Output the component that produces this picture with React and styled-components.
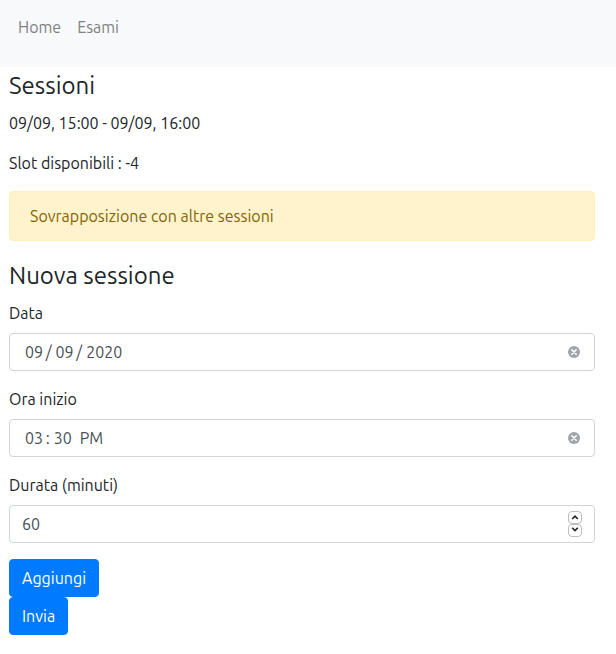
import React, { useState } from "react";
import styled, { createGlobalStyle } from "styled-components";

const GlobalStyle = createGlobalStyle`
  *, *::before, *::after { box-sizing: border-box; }
  body {
    margin: 0;
    background: #fff;
    color: #212529;
    font-family: Ubuntu, "Noto Sans", sans-serif;
    font-size: 16px;
    line-height: 24px;
  }
`;

const Navbar = styled.nav`
  display: flex;
  padding: 7px 10px 20px;
  background: #f8f9fb;
`;

const NavLink = styled.a`
  padding: 8px;
  color: #808182;
  text-decoration: none;
`;

const Main = styled.main`
  padding: 0 21px 16px 9px;
`;

const Heading = styled.h4`
  margin: 0 0 6px;
  font-size: 24px;
  font-weight: 400;
  line-height: 38px;
`;

const Paragraph = styled.p`
  margin: 0 0 16px;
`;

const Alert = styled.div`
  margin-bottom: 16px;
  padding: 12px 20px;
  border: 1px solid #ffeeba;
  border-radius: 4px;
  background: #fff3cd;
  color: #856404;
`;

const Field = styled.div`
  margin-bottom: 16px;
`;

const Label = styled.label`
  display: block;
  margin-bottom: 8px;
`;

const Control = styled.div`
  display: flex;
  align-items: center;
  height: 38px;
  padding: 0 12px 0 ${(p) => (p.$inset ? 15 : 12)}px;
  border: 1px solid #ced4da;
  border-radius: 4px;
  background: #fff;
`;

const Input = styled.input`
  flex: 1;
  min-width: 0;
  padding: 0;
  border: 0;
  outline: 0;
  background: transparent;
  color: #495057;
  font: inherit;
  appearance: textfield;

  &::-webkit-inner-spin-button { display: none; }
`;

const ClearButton = styled.button`
  display: flex;
  margin-right: 2px;
  padding: 0;
  border: 0;
  background: transparent;
`;

const Spinner = styled.div`
  display: flex;
  flex-direction: column;
`;

const SpinButton = styled.button`
  display: flex;
  align-items: center;
  justify-content: center;
  width: 14px;
  height: 13px;
  padding: 0;
  border: 1px solid #bcbcbc;
  border-radius: 4px;
  background: #fff;
`;

const Actions = styled.div`
  display: flex;
  flex-direction: column;
  align-items: flex-start;
`;

const Button = styled.button`
  height: 38px;
  padding: 0 12px;
  border: 1px solid #007bff;
  border-radius: 4px;
  background: #007bff;
  color: #fff;
  font: inherit;
`;

function ClearableField({ id, label, initial }) {
  const [value, setValue] = useState(initial);
  return (
    <Field>
      <Label htmlFor={id}>{label}</Label>
      <Control $inset>
        <Input id={id} type="text" value={value} onChange={(e) => setValue(e.target.value)} />
        <ClearButton type="button" aria-label={`Cancella ${label}`} onClick={() => setValue("")}>
          <svg width="12" height="12" viewBox="0 0 12 12">
            <circle cx="6" cy="6" r="6" fill="#a1a4a8" />
            <path d="M3.8 3.8l4.4 4.4M8.2 3.8L3.8 8.2" stroke="#fff" strokeWidth="1.6" strokeLinecap="round" />
          </svg>
        </ClearButton>
      </Control>
    </Field>
  );
}

function DurationField() {
  const [value, setValue] = useState(60);
  return (
    <Field>
      <Label htmlFor="durata">Durata (minuti)</Label>
      <Control>
        <Input id="durata" type="number" value={value} onChange={(e) => setValue(Number(e.target.value))} />
        <Spinner>
          <SpinButton type="button" aria-label="Aumenta" onClick={() => setValue(value + 1)}>
            <svg width="8" height="7" viewBox="0 0 8 7" fill="none">
              <path d="M1.2 5L4 2.2 6.8 5" stroke="#222" strokeWidth="1.6" />
            </svg>
          </SpinButton>
          <SpinButton type="button" aria-label="Diminuisci" onClick={() => setValue(value - 1)}>
            <svg width="8" height="7" viewBox="0 0 8 7" fill="none">
              <path d="M1.2 0.8L4 3.6 6.8 0.8" stroke="#222" strokeWidth="1.6" />
            </svg>
          </SpinButton>
        </Spinner>
      </Control>
    </Field>
  );
}

export default function App() {
  return (
    <>
      <GlobalStyle />
      <Navbar>
        <NavLink href="#home">Home</NavLink>
        <NavLink href="#esami">Esami</NavLink>
      </Navbar>
      <Main>
        <Heading>Sessioni</Heading>
        <Paragraph>09/09, 15:00 - 09/09, 16:00</Paragraph>
        <Paragraph>Slot disponibili : -4</Paragraph>
        <Alert role="alert">Sovrapposizione con altre sessioni</Alert>
        <Heading>Nuova sessione</Heading>
        <form onSubmit={(e) => e.preventDefault()}>
          <ClearableField id="data" label="Data" initial={"09\u2009/\u200509\u2009/\u20052020"} />
          <ClearableField id="ora" label="Ora inizio" initial={"03\u2009:\u200530\u2002PM"} />
          <DurationField />
          <Actions>
            <Button type="button">Aggiungi</Button>
            <Button type="submit">Invia</Button>
          </Actions>
        </form>
      </Main>
    </>
  );
}
